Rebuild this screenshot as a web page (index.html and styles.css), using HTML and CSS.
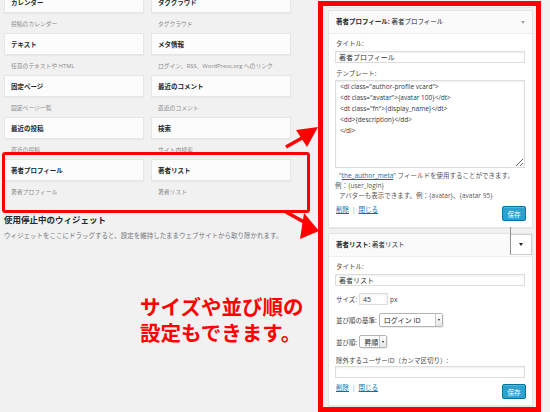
FILE: index.html
```html
<!DOCTYPE html>
<html lang="ja">
<head>
<meta charset="utf-8">
<title>ウィジェット</title>
<link rel="stylesheet" href="styles.css">
</head>
<body>
<div class="page">
  <div class="left">
    <div class="avail first">
      <div class="wi"><div class="wt">カレンダー</div><div class="wd">投稿のカレンダー</div></div>
      <div class="wi"><div class="wt">タグクラウド</div><div class="wd">タグクラウド</div></div>
      <div class="wi"><div class="wt">テキスト</div><div class="wd">任意のテキストや HTML</div></div>
      <div class="wi"><div class="wt">メタ情報</div><div class="wd">ログイン、RSS、WordPress.org へのリンク</div></div>
      <div class="wi"><div class="wt">固定ページ</div><div class="wd">固定ページ一覧</div></div>
      <div class="wi"><div class="wt">最近のコメント</div><div class="wd">直近のコメント</div></div>
      <div class="wi"><div class="wt">最近の投稿</div><div class="wd">直近の投稿</div></div>
      <div class="wi"><div class="wt">検索</div><div class="wd">サイト内検索</div></div>
    </div>
    <div class="avail hl">
      <div class="wi"><div class="wt">著者プロフィール</div><div class="wd">著者プロフィール</div></div>
      <div class="wi"><div class="wt">著者リスト</div><div class="wd">著者リスト</div></div>
    </div>
    <h2 class="inactive-title">使用停止中のウィジェット</h2>
    <p class="inactive-desc">ウィジェットをここにドラッグすると、設定を維持したままウェブサイトから取り除かれます。</p>
    <p class="callout">サイズや並び順の<br>設定もできます。</p>
  </div>

  <div class="right">
    <div class="prev"></div>

    <div class="widget">
      <div class="w-head">
        <span class="w-title"><b>著者プロフィール:</b> 著者プロフィール</span>
        <span class="w-arrow"></span>
      </div>
      <div class="w-body">
        <div class="lbl">タイトル:</div>
        <div class="inp">著者プロフィール</div>
        <div class="lbl gap6">テンプレート:</div>
        <textarea class="ta" readonly>&lt;dl class="author-profile vcard"&gt;
&lt;dt class="avatar"&gt;{avatar 100}&lt;/dt&gt;
&lt;dt class="fn"&gt;{display_name}&lt;/dt&gt;
&lt;dd&gt;{description}&lt;/dd&gt;
&lt;/dl&gt;</textarea>
        <div class="help">
          <div class="ind">"<a href="#">the_author_meta</a>" フィールドを使用することができます。</div>
          <div>例：{user_login}</div>
          <div class="ind">アバターも表示できます。例：{avatar}、{avatar 95}</div>
        </div>
        <div class="actions">
          <div class="links"><a href="#">削除</a><span class="sep">|</span><a href="#">閉じる</a></div>
          <div class="btn">保存</div>
        </div>
      </div>
    </div>

    <div class="widget second">
      <div class="w-head">
        <span class="w-title"><b>著者リスト:</b> 著者リスト</span>
        <span class="w-toggle"><span class="tri"></span></span>
      </div>
      <div class="w-body">
        <div class="lbl">タイトル:</div>
        <div class="inp">著者リスト</div>
        <div class="row r-size">
          <span>サイズ:</span>
          <span class="inp small">45</span>
          <span class="px">px</span>
        </div>
        <div class="row r-sel">
          <span>並び順の基準:</span>
          <span class="sel wide"><span class="sel-val">ログイン ID</span><span class="sel-btn"><span class="tri"></span></span></span>
        </div>
        <div class="row r-sel">
          <span>並び順:</span>
          <span class="sel narrow"><span class="sel-val">昇順</span><span class="sel-btn"><span class="tri"></span></span></span>
        </div>
        <div class="lbl gap8">除外するユーザーID（カンマ区切り）:</div>
        <div class="inp flush"></div>
        <div class="actions a2">
          <div class="links"><a href="#">削除</a><span class="sep">|</span><a href="#">閉じる</a></div>
          <div class="btn">保存</div>
        </div>
      </div>
    </div>
  </div>

  <svg class="arrows" width="550" height="412" viewBox="0 0 550 412">
    <line x1="286" y1="147" x2="302" y2="138" stroke="#ff0000" stroke-width="3.5"/>
    <polygon points="296,130 318,127 307,147" fill="#ff0000"/>
    <line x1="286" y1="212" x2="304" y2="222" stroke="#ff0000" stroke-width="3.5"/>
    <polygon points="304,213 319,231 300,239" fill="#ff0000"/>
  </svg>
</div>
</body>
</html>
```

FILE: styles.css
```css
* { box-sizing: border-box; }

html, body {
  margin: 0;
  padding: 0;
  background: #f1f1f1;
}

body {
  font-family: "Open Sans", "Noto Sans CJK JP", sans-serif;
  color: #23282d;
}

.page {
  position: relative;
  display: flex;
  width: 550px;
  height: 412px;
  overflow: hidden;
  background: #f1f1f1;
}

/* ---------- left column ---------- */
.left {
  flex: none;
  width: 318px;
  padding-left: 4px;
}

.avail {
  display: grid;
  grid-template-columns: 140px 140px;
  column-gap: 7px;
}

.avail.first { margin-top: -9px; }

.wt {
  height: 22px;
  display: flex;
  align-items: center;
  padding-left: 6px;
  background: #fcfcfc;
  border: 1px solid #e6e6e6;
  box-shadow: 0 1px 1px rgba(0,0,0,0.03);
  font-size: 6.5px;
  font-weight: bold;
  color: #23282d;
}

.wd {
  height: 20px;
  display: flex;
  align-items: center;
  padding-left: 7px;
  font-size: 5.8px;
  color: #8a8a8a;
}

.hl { position: relative; }
.hl::before {
  content: "";
  position: absolute;
  left: -2px;
  top: -7px;
  width: 302px;
  height: 55px;
  border: 3px solid #ff0000;
  border-radius: 3px;
}

.inactive-title {
  margin: 13px 0 0;
  font-size: 8.5px;
  line-height: 12px;
  font-weight: bold;
  color: #23282d;
}

.inactive-desc {
  margin: 5px 0 0;
  font-size: 6.5px;
  line-height: 10px;
  color: #72777c;
  white-space: nowrap;
}

.callout {
  margin: 53px 0 0 136px;
  font-size: 20.5px;
  line-height: 26px;
  font-weight: bold;
  color: #ff0000;
  white-space: nowrap;
}

/* ---------- right column ---------- */
.right {
  flex: none;
  width: 223px;
  height: 411px;
  margin-top: 1px;
  border: 5px solid #ff0000;
  background: #f1f1f1;
  overflow: hidden;
}

.prev {
  height: 2px;
  margin: 0 3px 0 5px;
  background: #fff;
  border-bottom: 1px solid #e5e5e5;
}

.widget {
  margin: 2px 3px 0 5px;
  background: #fff;
  border: 1px solid #e5e5e5;
  box-shadow: 0 1px 1px rgba(0,0,0,0.04);
}

.widget.second { margin-top: 5px; }

.w-head {
  position: relative;
  height: 23px;
  display: flex;
  align-items: flex-start;
  background: #fafafa;
  border-bottom: 1px solid #eeeeee;
  font-size: 6.5px;
  color: #23282d;
}

.w-title {
  line-height: 22px;
  padding-left: 7px;
  white-space: nowrap;
}

.w-title b { font-weight: bold; }

.w-arrow {
  margin: 10px 7px 0 auto;
  width: 0;
  height: 0;
  border-left: 2.5px solid transparent;
  border-right: 2.5px solid transparent;
  border-top: 3px solid #a0a5aa;
}

.w-toggle {
  position: relative;
  margin-left: auto;
  width: 22px;
  height: 21px;
  background: #fff;
  border: 1px solid #d0d0d0;
  border-left-color: #8c8f94;
  display: flex;
  align-items: center;
  justify-content: center;
}

.w-toggle::before {
  content: "";
  position: absolute;
  left: -1px;
  top: -8px;
  width: 1px;
  height: 8px;
  background: #8c8f94;
}

.tri {
  width: 0;
  height: 0;
  border-left: 2.5px solid transparent;
  border-right: 2.5px solid transparent;
  border-top: 3px solid #222;
}

.w-body {
  padding: 5px 7px 6px 6px;
  font-size: 6.5px;
  color: #444;
}

.lbl {
  font-size: 6.5px;
  line-height: 10px;
  padding-left: 1px;
  color: #444;
  white-space: nowrap;
}

.lbl.gap6 { margin-top: 6px; }
.lbl.gap8 { margin-top: 8px; }

.inp {
  height: 12px;
  margin-top: 2px;
  display: flex;
  align-items: center;
  padding: 0 3px;
  background: #fff;
  border: 1px solid #dddddd;
  box-shadow: inset 0 1px 2px rgba(0,0,0,0.07);
  font-size: 7px;
  color: #32373c;
}

.inp.flush { margin-top: 0; }

.ta {
  display: block;
  width: 100%;
  height: 88px;
  margin: 1px 0 0;
  padding: 0 4px;
  border: 1px solid #dddddd;
  box-shadow: inset 0 1px 2px rgba(0,0,0,0.07);
  font-family: "Open Sans", "Noto Sans CJK JP", sans-serif;
  font-size: 6.5px;
  line-height: 11px;
  color: #32373c;
  background: #fff;
  overflow: hidden;
}

.help {
  margin-top: 3px;
  font-size: 6.5px;
  line-height: 10px;
  color: #555;
  white-space: nowrap;
}

.help .ind { padding-left: 4px; }

.help a {
  color: #0073aa;
  text-decoration: underline;
}

.actions {
  display: flex;
  justify-content: space-between;
  align-items: flex-start;
  margin-top: 5px;
}

.actions.a2 { margin-top: 6px; }

.links {
  font-size: 6.5px;
  line-height: 10px;
  padding-left: 1px;
  margin-top: -1px;
}

.links a {
  color: #0073aa;
  text-decoration: underline;
}

.links .sep {
  color: #999;
  margin: 0 3px;
}

.btn {
  width: 24px;
  height: 15px;
  margin-right: -1px;
  display: flex;
  align-items: center;
  justify-content: center;
  background: #2ea2cc;
  border: 1px solid #0074a2;
  border-radius: 2px;
  box-shadow: inset 0 1px 0 rgba(120,200,230,0.5);
  color: #fff;
  font-size: 6.5px;
}

.row {
  display: flex;
  align-items: center;
  padding-left: 1px;
  font-size: 6.5px;
  color: #444;
  white-space: nowrap;
}

.r-size { margin-top: 7px; }
.r-sel { margin-top: 8px; }

.inp.small {
  width: 29px;
  margin: 0 0 0 2px;
}

.px { margin-left: 2px; }

.sel {
  display: flex;
  align-items: stretch;
  margin-left: 2px;
  background: #fff;
  border: 1px solid #b4b4b4;
  border-radius: 2px;
  box-shadow: 1px 1px 0 rgba(0,0,0,0.08);
  font-size: 7px;
  color: #23282d;
}

.sel.wide { width: 64px; height: 14px; }
.sel.narrow { width: 28px; height: 13px; }

.sel-val {
  flex: 1;
  display: flex;
  align-items: center;
  padding-left: 4px;
}

.sel-btn {
  width: 7px;
  display: flex;
  align-items: center;
  justify-content: center;
  border-left: 1px solid #c8c8c8;
  background: linear-gradient(#ffffff, #e6e6e6);
}

.sel-btn .tri {
  border-left-width: 1.5px;
  border-right-width: 1.5px;
  border-top-width: 2px;
}

.arrows {
  position: absolute;
  left: 0;
  top: 0;
  pointer-events: none;
}
```
